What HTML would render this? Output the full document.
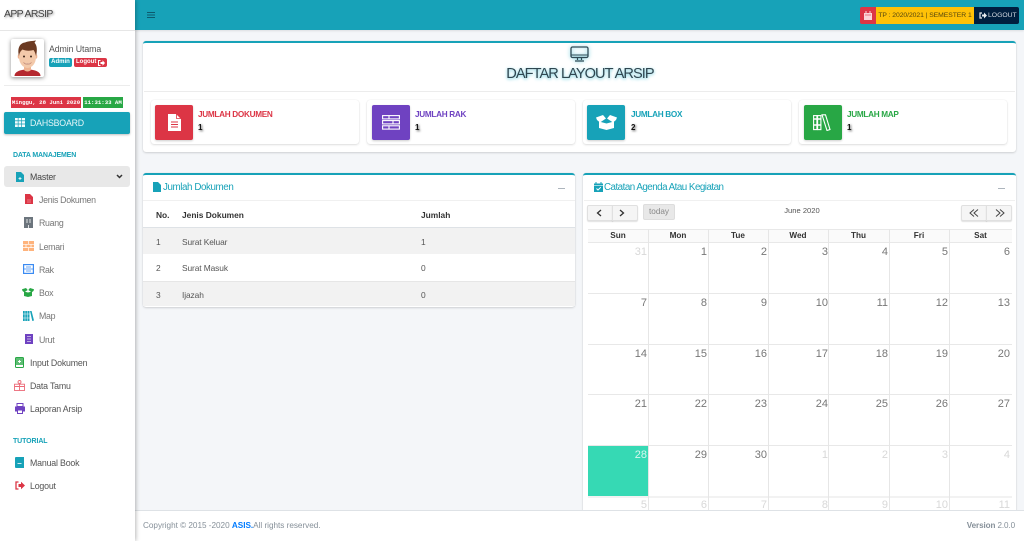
<!DOCTYPE html>
<html><head><meta charset="utf-8"><title>App Arsip</title>
<style>
*{box-sizing:border-box}
html,body{margin:0;padding:0}
body{width:1024px;height:541px;overflow:hidden;position:relative;background:#f4f6f9;font-family:"Liberation Sans",sans-serif;color:#444;font-size:8.5px}
.a{position:absolute;white-space:nowrap}
svg{position:absolute;display:block}
.nav{position:absolute;white-space:nowrap;font-size:8.8px;letter-spacing:-.18px;color:#555;line-height:12px}
.sub{color:#777;letter-spacing:-.3px}
.card{position:absolute;background:#fff;border-top:2px solid #17a2b8;border-radius:3px;box-shadow:0 0 1px rgba(0,0,0,.12),0 1px 2px rgba(0,0,0,.14)}
.ib{position:absolute;top:100px;width:208px;height:44px;background:#fff;border-radius:3px;box-shadow:0 0 1px rgba(0,0,0,.12),0 1px 2px rgba(0,0,0,.12)}
.ic{position:absolute;top:105px;width:38px;height:35px;border-radius:2px;box-shadow:0 1px 2px rgba(0,0,0,.2)}
.it{position:absolute;top:108.500px;font-size:8.200px;letter-spacing:-.3px;font-weight:bold;white-space:nowrap;line-height:12px}
.iv{position:absolute;top:122px;font-size:8px;font-weight:bold;color:#111;text-shadow:1px 1px 2px #555;line-height:12px}
.v{position:absolute;width:1px;background:#e6e6e6}
.h{position:absolute;height:1px;background:#e8e8e8;left:588px;width:424px}
.d{position:absolute;font-size:11px;color:#777;text-align:right;width:40px;line-height:14px}
.o{color:#d8d8d8}
.wd{position:absolute;top:229px;font-size:8.200px;font-weight:bold;color:#333;text-align:center;line-height:14px}
.btn{position:absolute;top:205px;height:16px;background:#f5f5f5;border:1px solid #e0e0e0;box-shadow:0 1px 1px rgba(0,0,0,.12)}
.tr{position:absolute;left:143px;width:432px}
.td{position:absolute;font-size:8.400px;letter-spacing:-.1px;color:#555;line-height:12px;white-space:nowrap}
.th{position:absolute;font-size:8.400px;font-weight:bold;color:#333;line-height:12px;white-space:nowrap}
</style></head>
<body>

<!-- top bar -->
<div class="a" style="left:135px;top:0;width:889px;height:30px;background:#17a2b8;box-shadow:0 1px 2px rgba(0,0,0,.1)"></div>
<svg style="left:147px;top:11px" width="8" height="8" viewBox="0 0 8 8"><path d="M0 1.500h8M0 4h8M0 6.500h8" stroke="#0c5a6e" stroke-width="1"/></svg>
<div class="a" style="left:860px;top:7px;width:16px;height:17px;background:#dc3545;border-radius:2px 0 0 2px"></div>
<svg style="left:864px;top:11px" width="8" height="9" viewBox="0 0 8 9"><path d="M0 2h8v7H0z" fill="#fbd5d8"/><path d="M2 0v2M6 0v2" stroke="#fbd5d8"/><path d="M1 4h6" stroke="#dc3545" stroke-width=".6"/></svg>
<div class="a" style="left:876px;top:7px;width:98px;height:17px;background:#ffc107;color:#54460f;font-size:6.800px;letter-spacing:-.06px;line-height:17px;text-align:center">TP : 2020/2021 | SEMESTER 1</div>
<div class="a" style="left:974px;top:7px;width:45px;height:17px;background:#001f3f;color:#d5dbe2;font-size:6.800px;line-height:17px;padding-left:14px;border-radius:0 2px 2px 0">LOGOUT</div>
<svg style="left:979px;top:12px" width="8" height="7" viewBox="0 0 8 7"><path d="M3 1H1v5h2" fill="none" stroke="#e8ecef" stroke-width="1.200"/><path d="M3 2.500h2V.5L8 3.500 5 6.500v-2H3z" fill="#e8ecef"/></svg>

<!-- main top card -->
<div class="card" style="left:143px;top:41px;width:873px;height:111px"></div>
<div class="a" style="left:144px;top:91px;width:871px;height:1px;background:#ececec"></div>
<svg style="left:570px;top:46px;filter:drop-shadow(0 0 2px #5cc6d8)" width="19" height="16" viewBox="0 0 19 16"><rect x="1" y="1" width="17" height="10.500" rx="1.500" fill="none" stroke="#2f4a55" stroke-width="1.300"/><path d="M1 9h17" stroke="#2f4a55"/><path d="M7.500 12v2M11.500 12v2M5 15h9" stroke="#2f4a55" stroke-width="1.200"/></svg>
<div class="a" style="left:480px;width:200px;top:64.500px;text-align:center;font-size:14.600px;letter-spacing:-.95px;line-height:18px;color:#2f4650;text-shadow:0 1px 3px #5cc6d8">DAFTAR LAYOUT ARSIP</div>

<div class="ib" style="left:151px"></div>
<div class="ic" style="left:155px;background:#dc3545"></div>
<svg style="left:168px;top:114px" width="13" height="17" viewBox="0 0 13 17"><path d="M0 0h8l5 5v12H0z" fill="#fff"/><path d="M8.500 0v4.500H13" fill="none" stroke="#dc3545" stroke-width=".8"/><path d="M3 8h7M3 10.500h7M3 13h7" stroke="#dc3545" stroke-width=".9"/></svg>
<div class="it" style="left:198px;color:#dc3545">JUMLAH DOKUMEN</div><div class="iv" style="left:198px">1</div>

<div class="ib" style="left:367px"></div>
<div class="ic" style="left:372px;background:#6f42c1"></div>
<svg style="left:382px;top:115px" width="18" height="15" viewBox="0 0 18 15"><g fill="none" stroke="#fff" stroke-width="1.100"><rect x=".6" y=".6" width="16.800" height="3.300"/><rect x=".6" y="5.600" width="16.800" height="3.300"/><rect x=".6" y="10.800" width="16.800" height="3.300"/><path d="M7 .6v3.300M11 5.600v3.300M7 10.800v3.300"/></g></svg>
<div class="it" style="left:415px;color:#6f42c1">JUMLAH RAK</div><div class="iv" style="left:415px">1</div>

<div class="ib" style="left:583px"></div>
<div class="ic" style="left:587px;background:#17a2b8"></div>
<svg style="left:596px;top:115px" width="21" height="15" viewBox="0 0 21 15"><path d="M3 6.500l7.500 2 7.500-2V13l-7.500 2L3 13z" fill="#fff"/><path d="M0 2.500L7 0l3 3.500-6 4L1 5zM21 2.500L14 0l-3 3.500 6 4L20 5z" fill="#fff"/></svg>
<div class="it" style="left:631px;color:#17a2b8">JUMLAH BOX</div><div class="iv" style="left:631px">2</div>

<div class="ib" style="left:799px"></div>
<div class="ic" style="left:804px;background:#28a745"></div>
<svg style="left:813px;top:114px" width="20" height="17" viewBox="0 0 20 17"><g fill="none" stroke="#fff" stroke-width="1.100"><rect x=".6" y="1.600" width="3.300" height="14"/><rect x="4.600" y="1.600" width="3.300" height="14"/><path d="M9 .8h3.500L17 15.500l-3 1z"/></g><path d="M.6 5h7.300M.6 11h7.300" stroke="#fff" stroke-width="1.500"/></svg>
<div class="it" style="left:847px;color:#28a745">JUMLAH MAP</div><div class="iv" style="left:847px">1</div>

<!-- table card -->
<div class="card" style="left:143px;top:173px;width:432px;height:134px"></div>
<svg style="left:153px;top:182px" width="8" height="10" viewBox="0 0 8 10"><path d="M0 0h5l3 3v7H0z" fill="#17a2b8"/></svg>
<div class="a" style="left:163px;top:181px;font-size:9.800px;letter-spacing:-.42px;line-height:13px;color:#17a2b8">Jumlah Dokumen</div>
<div class="a" style="left:558px;top:188px;width:7px;height:1px;background:#adb5bd"></div>
<div class="a" style="left:143px;top:200px;width:432px;height:1px;background:#f0f0f0"></div>
<div class="tr" style="top:227px;height:1px;background:#dee2e6"></div>
<div class="tr" style="top:228px;height:26px;background:#f2f2f2"></div>
<div class="tr" style="top:281px;height:25px;background:#f2f2f2;border-top:1px solid #e6e6e6"></div>
<div class="th" style="left:156px;top:208.500px">No.</div>
<div class="th" style="left:182px;top:208.500px">Jenis Dokumen</div>
<div class="th" style="left:421px;top:208.500px">Jumlah</div>
<div class="td" style="left:156px;top:235.500px">1</div><div class="td" style="left:182px;top:235.500px">Surat Keluar</div><div class="td" style="left:421px;top:235.500px">1</div>
<div class="td" style="left:156px;top:262px">2</div><div class="td" style="left:182px;top:262px">Surat Masuk</div><div class="td" style="left:421px;top:262px">0</div>
<div class="td" style="left:156px;top:288.500px">3</div><div class="td" style="left:182px;top:288.500px">Ijazah</div><div class="td" style="left:421px;top:288.500px">0</div>

<!-- calendar card -->
<div class="card" style="left:583px;top:173px;width:433px;height:350px"></div>
<svg style="left:594px;top:182px" width="9" height="10" viewBox="0 0 9 10"><path d="M0 1.500h9V10H0z" fill="#17a2b8"/><path d="M2 0v2M7 0v2" stroke="#17a2b8"/><path d="M0 3.500h9" stroke="#fff" stroke-width=".6"/><path d="M2.500 6.500l1.500 1.500 2.800-2.800" fill="none" stroke="#fff"/></svg>
<div class="a" style="left:604px;top:181px;font-size:9.800px;letter-spacing:-.52px;line-height:13px;color:#17a2b8">Catatan Agenda Atau Kegiatan</div>
<div class="a" style="left:998px;top:188px;width:7px;height:1px;background:#adb5bd"></div>
<div class="a" style="left:584px;top:200px;width:431px;height:1px;background:#f0f0f0"></div>

<div class="btn" style="left:587px;width:26px;border-radius:2px 0 0 2px"></div>
<div class="btn" style="left:612px;width:26px;border-radius:0 2px 2px 0"></div>
<svg style="left:596px;top:209px" width="34" height="8" viewBox="0 0 34 8"><path d="M5 1L1.500 4 5 7M24 1l3.500 3L24 7" fill="none" stroke="#333" stroke-width="1.300"/></svg>
<div class="a" style="left:643px;top:204px;width:32px;height:16px;background:#e8e8e8;border:1px solid #ddd;border-radius:2px;color:#888;font-size:8.200px;line-height:14px;text-align:center">today</div>
<div class="a" style="left:752px;top:205px;width:100px;text-align:center;font-size:7.600px;line-height:12px;color:#555">June 2020</div>
<div class="btn" style="left:961px;width:26px;border-radius:2px 0 0 2px"></div>
<div class="btn" style="left:986px;width:26px;border-radius:0 2px 2px 0"></div>
<svg style="left:969px;top:209px" width="36" height="8" viewBox="0 0 36 8"><path d="M5 .5L1 4l4 3.500M9 .5L5 4l4 3.500M27 .5L31 4l-4 3.500M31 .5L35 4l-4 3.500" fill="none" stroke="#444" stroke-width="1"/></svg>

<div class="a" style="left:588px;top:229px;width:424px;height:14px;background:#fafafa"></div>
<div class="h" style="top:229px"></div><div class="h" style="top:242px"></div><div class="h" style="top:293px"></div><div class="h" style="top:344px"></div><div class="h" style="top:394px"></div><div class="h" style="top:445px"></div><div class="h" style="top:496px;height:2px;background:#f2f2f2"></div>
<div class="v" style="left:648px;top:229px;height:282px"></div>
<div class="v" style="left:708px;top:229px;height:282px"></div>
<div class="v" style="left:768px;top:229px;height:282px"></div>
<div class="v" style="left:828px;top:229px;height:282px"></div>
<div class="v" style="left:889px;top:229px;height:282px"></div>
<div class="v" style="left:949px;top:229px;height:282px"></div>
<div class="a" style="left:588px;top:446px;width:60px;height:50px;background:#36d9b4"></div>

<div class="wd" style="left:588px;width:60px">Sun</div><div class="wd" style="left:648px;width:60px">Mon</div><div class="wd" style="left:708px;width:60px">Tue</div><div class="wd" style="left:768px;width:60px">Wed</div><div class="wd" style="left:828px;width:61px">Thu</div><div class="wd" style="left:889px;width:60px">Fri</div><div class="wd" style="left:949px;width:63px">Sat</div>

<div class="d o" style="left:607px;top:245px">31</div><div class="d" style="left:667px;top:245px">1</div><div class="d" style="left:727px;top:245px">2</div><div class="d" style="left:788px;top:245px">3</div><div class="d" style="left:848px;top:245px">4</div><div class="d" style="left:908px;top:245px">5</div><div class="d" style="left:970px;top:245px">6</div>
<div class="d" style="left:607px;top:296px">7</div><div class="d" style="left:667px;top:296px">8</div><div class="d" style="left:727px;top:296px">9</div><div class="d" style="left:788px;top:296px">10</div><div class="d" style="left:848px;top:296px">11</div><div class="d" style="left:908px;top:296px">12</div><div class="d" style="left:970px;top:296px">13</div>
<div class="d" style="left:607px;top:347px">14</div><div class="d" style="left:667px;top:347px">15</div><div class="d" style="left:727px;top:347px">16</div><div class="d" style="left:788px;top:347px">17</div><div class="d" style="left:848px;top:347px">18</div><div class="d" style="left:908px;top:347px">19</div><div class="d" style="left:970px;top:347px">20</div>
<div class="d" style="left:607px;top:397px">21</div><div class="d" style="left:667px;top:397px">22</div><div class="d" style="left:727px;top:397px">23</div><div class="d" style="left:788px;top:397px">24</div><div class="d" style="left:848px;top:397px">25</div><div class="d" style="left:908px;top:397px">26</div><div class="d" style="left:970px;top:397px">27</div>
<div class="d" style="left:607px;top:448px;color:#d8f7ef">28</div><div class="d" style="left:667px;top:448px">29</div><div class="d" style="left:727px;top:448px">30</div><div class="d o" style="left:788px;top:448px">1</div><div class="d o" style="left:848px;top:448px">2</div><div class="d o" style="left:908px;top:448px">3</div><div class="d o" style="left:970px;top:448px">4</div>
<div class="d o" style="left:607px;top:498px">5</div><div class="d o" style="left:667px;top:498px">6</div><div class="d o" style="left:727px;top:498px">7</div><div class="d o" style="left:788px;top:498px">8</div><div class="d o" style="left:848px;top:498px">9</div><div class="d o" style="left:908px;top:498px">10</div><div class="d o" style="left:970px;top:498px">11</div>

<!-- footer -->
<div class="a" style="left:135px;top:510px;width:889px;height:31px;background:#fff;border-top:1px solid #dee2e6"></div>
<div class="a" style="left:143px;top:520px;font-size:8.200px;letter-spacing:-.02px;line-height:12px;color:#869099">Copyright © 2015 -2020 <b style="color:#007bff">ASIS.</b>All rights reserved.</div>
<div class="a" style="right:9px;top:520px;font-size:8.100px;letter-spacing:-.1px;line-height:12px;color:#869099"><b>Version</b> 2.0.0</div>

<!-- sidebar -->
<div class="a" style="left:0;top:0;width:135px;height:541px;background:#fff;box-shadow:1px 0 4px rgba(0,0,0,.28)"></div>
<div class="a" style="left:4px;top:8px;font-size:10.400px;letter-spacing:-.6px;line-height:14px;color:#444;text-shadow:1px 1px 2px #999">APP ARSIP</div>
<div class="a" style="left:0;top:30px;width:135px;height:1px;background:#e6e6e6"></div>

<div class="a" style="left:11px;top:39px;width:33px;height:38px;background:#fff;border-radius:2px;box-shadow:0 1px 4px rgba(0,0,0,.45)"></div>
<svg style="left:13px;top:40px" width="29" height="36" viewBox="0 0 29 36">
<path d="M1.500 36c0-4 5-6.500 13-6.500S27.500 32 27.500 36z" fill="#b5282f"/>
<path d="M11 25h7v5c-2 2-5 2-7 0z" fill="#eeb391"/>
<ellipse cx="6" cy="16.500" rx="1.300" ry="2.200" fill="#eeb391"/><ellipse cx="23" cy="16.500" rx="1.300" ry="2.200" fill="#eeb391"/>
<ellipse cx="14.500" cy="17" rx="8.500" ry="11" fill="#f3c9aa"/>
<path d="M6 16C4 8 7 3 12 2.500 15 1 20 1 23 .5l-1.500 2.200C24 5 24.500 10 23 16c-.5-2-1-4-2.500-6-3 1-8 1-11-.5C7.500 11 6.500 13 6 16z" fill="#6b3a22"/>
<circle cx="11" cy="16.500" r="1" fill="#3a2418"/><circle cx="18" cy="16.500" r="1" fill="#3a2418"/>
<path d="M10.500 22.500c2 1.500 6 1.500 8 0-1 2.500-7 2.500-8 0z" fill="#fff" stroke="#b06a50" stroke-width=".4"/>
</svg>

<div class="a" style="left:49px;top:43px;font-size:8.800px;letter-spacing:-.1px;line-height:12px;color:#555">Admin Utama</div>
<div class="a" style="left:49px;top:58px;width:23px;height:9px;background:#17a2b8;border-radius:2px;color:#fff;font-size:6px;font-weight:bold;line-height:9px;text-align:center">Admin</div>
<div class="a" style="left:74px;top:58px;width:33px;height:9px;background:#dc3545;border-radius:2px;color:#fff;font-size:6px;font-weight:bold;line-height:9px;padding-left:2px">Logout</div>
<svg style="left:98px;top:59.500px" width="7" height="6" viewBox="0 0 7 6"><path d="M2.500.5H.5v5h2" fill="none" stroke="#fff"/><path d="M2.500 2h2V.3L7 3 4.500 5.700V4h-2z" fill="#fff"/></svg>
<div class="a" style="left:4px;top:85px;width:126px;height:1px;background:#ececec"></div>

<div class="a" style="left:11px;top:97px;width:70px;height:11px;background:#dc3545;color:#fff;font-family:'Liberation Mono',monospace;font-weight:bold;font-size:5.700px;line-height:11px;text-align:center">Minggu, 28 Juni 2020</div>
<div class="a" style="left:83px;top:97px;width:40px;height:11px;background:#28a745;color:#fff;font-family:'Liberation Mono',monospace;font-weight:bold;font-size:5.700px;line-height:11px;text-align:center">11:31:33 AM</div>

<div class="a" style="left:4px;top:112px;width:126px;height:22px;background:#17a2b8;border-radius:2px;box-shadow:0 1px 2px rgba(0,0,0,.25)"></div>
<svg style="left:15px;top:118px" width="10" height="9" viewBox="0 0 10 9"><g fill="#f2fbfc"><rect width="2.800" height="2.400"/><rect x="3.500" width="2.800" height="2.400"/><rect x="7" width="3" height="2.400"/><rect y="3.200" width="2.800" height="2.400"/><rect x="3.500" y="3.200" width="2.800" height="2.400"/><rect x="7" y="3.200" width="3" height="2.400"/><rect y="6.400" width="2.800" height="2.600"/><rect x="3.500" y="6.400" width="2.800" height="2.600"/><rect x="7" y="6.400" width="3" height="2.600"/></g></svg>
<div class="nav" style="left:30px;top:117px;color:#e6f6f8;letter-spacing:-.2px">DAHSBOARD</div>

<div class="a" style="left:13px;top:150px;font-size:7px;letter-spacing:-.15px;line-height:11px;color:#17a2b8;font-weight:bold">DATA MANAJEMEN</div>

<div class="a" style="left:4px;top:166px;width:126px;height:21px;background:#e8e8e8;border-radius:3px"></div>
<svg style="left:16px;top:172px" width="8" height="10" viewBox="0 0 8 10"><path d="M0 0h5l3 3v7H0z" fill="#17a2b8"/><path d="M2.500 6.500h3M4 5v3" stroke="#fff" stroke-width=".8"/></svg>
<div class="nav" style="left:30px;top:171px;color:#444">Master</div>
<svg style="left:116px;top:174px" width="7" height="5" viewBox="0 0 7 5"><path d="M1 1l2.500 2.500L6 1" fill="none" stroke="#333" stroke-width="1.500"/></svg>

<svg style="left:25px;top:194px" width="8" height="10" viewBox="0 0 8 10"><path d="M0 0h5l3 3v7H0z" fill="#dc3545"/><path d="M2 6h4M2 8h4" stroke="#f7b8be" stroke-width=".6"/></svg>
<div class="nav sub" style="left:39px;top:194px">Jenis Dokumen</div>
<svg style="left:24px;top:217px" width="9" height="11" viewBox="0 0 9 11"><path d="M0 0h9v11H0z" fill="#6c757d"/><path d="M3 2v4M6 2v4M4.500 8v3" stroke="#dfe2e4" stroke-width="1"/></svg>
<div class="nav sub" style="left:39px;top:217px">Ruang</div>
<svg style="left:23px;top:241px" width="11" height="10" viewBox="0 0 11 10"><path d="M0 0h11v10H0z" fill="#fd9a50" opacity=".75"/><path d="M0 3.300h11M0 6.600h11M5.500 0v3.300M3 3.300v3.300M8 3.300v3.300M5.500 6.600V10" stroke="#fff" stroke-width=".7"/></svg>
<div class="nav sub" style="left:39px;top:241px">Lemari</div>
<svg style="left:23px;top:264px" width="11" height="10" viewBox="0 0 11 10"><rect x=".6" y=".6" width="9.800" height="8.800" fill="#fff" stroke="#3b8bf2" stroke-width="1.200"/><path d="M0 5h11M3 3h5M3 7h5" stroke="#3b8bf2" stroke-width=".8"/></svg>
<div class="nav sub" style="left:39px;top:264px">Rak</div>
<svg style="left:22px;top:288px" width="12" height="9" viewBox="0 0 12 9"><path d="M2 3.500L6 4.500l4-1V8L6 9 2 8z" fill="#28a745"/><path d="M0 1.200L4 0l1.700 2-3.400 2.300L.5 3zM12 1.200L8 0 6.300 2l3.400 2.300L11.500 3z" fill="#28a745"/></svg>
<div class="nav sub" style="left:39px;top:287px">Box</div>
<svg style="left:23px;top:311px" width="11" height="10" viewBox="0 0 11 10"><path d="M0 0h6.500v10H0zM7 0l1.500-.3L11 9.500l-1.700.5z" fill="#17a2b8"/><path d="M2 0v10M4.200 0v10M0 3h6.500M0 7h6.500" stroke="#fff" stroke-width=".5"/></svg>
<div class="nav sub" style="left:39px;top:310px">Map</div>
<svg style="left:25px;top:334px" width="8" height="10" viewBox="0 0 8 10"><path d="M0 0h8v10H0z" fill="#6f42c1"/><path d="M2 2.500h4M2 5h4M2 7.500h4" stroke="#dcd0f0" stroke-width=".7"/></svg>
<div class="nav sub" style="left:39px;top:334px">Urut</div>

<svg style="left:15px;top:357px" width="9" height="11" viewBox="0 0 9 11"><rect x=".5" y=".5" width="8" height="10" rx="1" fill="#fff" stroke="#28a745"/><rect x="1" y="1" width="7" height="7" fill="#28a745" opacity=".75"/><path d="M3 4.500h3M4.500 3v3" stroke="#fff" stroke-width=".9"/></svg>
<div class="nav" style="left:30px;top:357px">Input Dokumen</div>
<svg style="left:14px;top:380px" width="11" height="11" viewBox="0 0 11 11"><g fill="none" stroke="#ec6a78" stroke-width=".9"><circle cx="5.500" cy="2" r="1.500"/><rect x=".5" y="4.200" width="10" height="6.300"/><path d="M5.500 4.200v6.300M.5 6.500h10"/></g></svg>
<div class="nav" style="left:30px;top:380px">Data Tamu</div>
<svg style="left:15px;top:403px" width="10" height="11" viewBox="0 0 10 11"><path d="M2 .5h6v3H2z" fill="none" stroke="#6f42c1"/><path d="M0 3.500h10v5H8v2.500H2V8.500H0z" fill="#6f42c1"/><path d="M3 7.500h4v2.500H3z" fill="#fff"/></svg>
<div class="nav" style="left:30px;top:403px">Laporan Arsip</div>

<div class="a" style="left:13px;top:436px;font-size:7px;letter-spacing:-.1px;line-height:11px;color:#17a2b8;font-weight:bold">TUTORIAL</div>

<svg style="left:15px;top:457px" width="9" height="11" viewBox="0 0 9 11"><path d="M1 0h8v11H1a1 1 0 0 1-1-1V1a1 1 0 0 1 1-1z" fill="#17a2b8"/><path d="M2.500 6.500h4" stroke="#fff" stroke-width=".8"/></svg>
<div class="nav" style="left:30px;top:457px">Manual Book</div>
<svg style="left:15px;top:481px" width="10" height="9" viewBox="0 0 10 9"><path d="M3.500 1H1v7h2.500" fill="none" stroke="#dc3545" stroke-width="1.300"/><path d="M3.500 3h2.500V.8L10 4.500 6 8.200V6H3.500z" fill="#dc3545"/></svg>
<div class="nav" style="left:30px;top:480px">Logout</div>

</body></html>
